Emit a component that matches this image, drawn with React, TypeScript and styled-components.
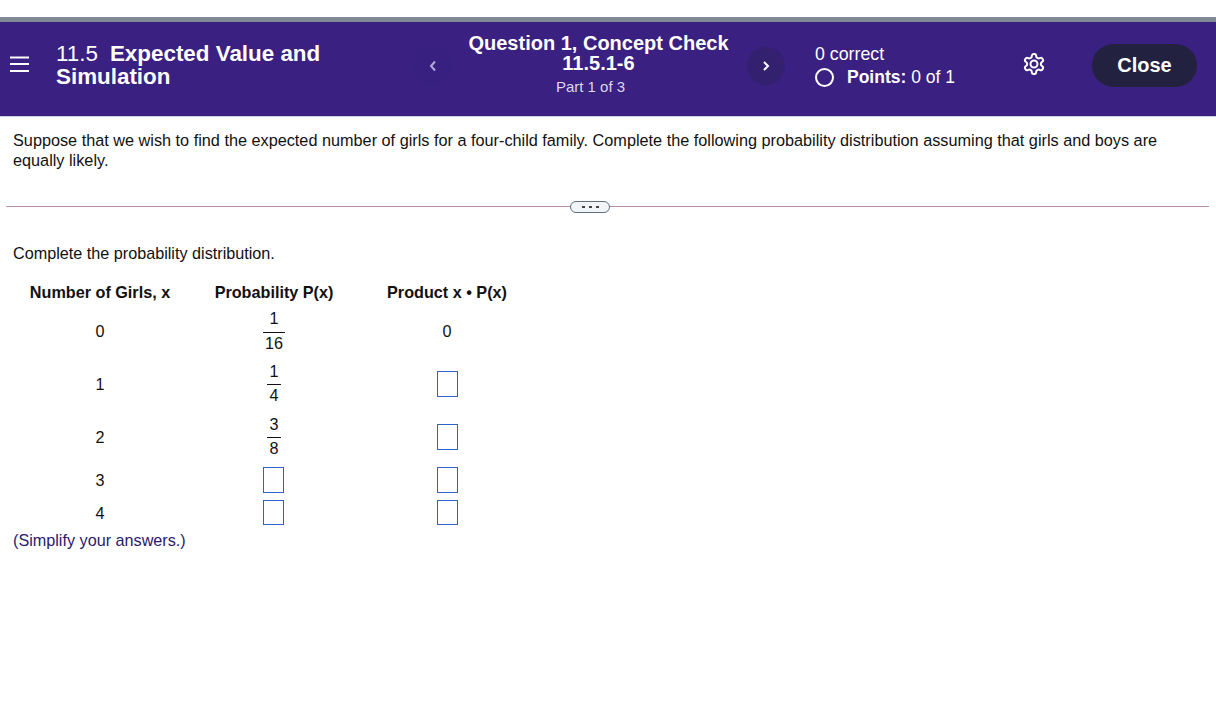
import React from "react";
import styled, { createGlobalStyle } from "styled-components";

const Global = createGlobalStyle`
  html, body { margin: 0; padding: 0; background: #fff; }
  body { font-family: "Liberation Sans", Arial, sans-serif; color: #111; }
`;

const Page = styled.div`
  padding-top: 17px;
  height: 710px;
  overflow: hidden;
`;

const Header = styled.header`
  display: flex;
  align-items: flex-start;
  height: 94px;
  background: #3a2080;
  border-top: 5px solid #7f8a96;
  border-bottom: 1px solid #c8d4e4;
  color: #fff;
`;

const Menu = styled.div`
  width: 56px;
  flex: none;
  padding: 34px 0 0 10px;
  box-sizing: border-box;
  svg { display: block; }
`;

const Title = styled.div`
  width: 358px;
  flex: none;
  padding-top: 20px;
  font-size: 22.4px;
  line-height: 23px;
  font-weight: 700;
  span { font-weight: 400; margin-right: 12px; }
`;

const NavButton = styled.div<{ $dim?: boolean }>`
  width: 38px;
  height: 38px;
  margin-top: 25px;
  flex: none;
  border-radius: 50%;
  background: ${(p) => (p.$dim ? "#382080" : "#33216f")};
  display: flex;
  align-items: center;
  justify-content: center;
  color: ${(p) => (p.$dim ? "#b0a8d8" : "#fff")};
`;

const QuestionBlock = styled.div`
  width: 293px;
  flex: none;
  margin-right: 2px;
  text-align: center;
  padding-top: 11px;
  font-weight: 700;
  font-size: 20px;
  line-height: 20px;
`;

const Part = styled.div`
  font-size: 15px;
  font-weight: 400;
  line-height: 20px;
  margin: 4px 16px 0 0;
  color: #dcd8ea;
`;

const Score = styled.div`
  width: 207px;
  flex: none;
  margin-left: 30px;
  padding-top: 21px;
  font-size: 17.8px;
  line-height: 22px;
`;

const PointsRow = styled.div`
  display: flex;
  align-items: center;
  gap: 13px;
  margin-top: 1px;
  font-size: 17.5px;
  b { font-weight: 700; }
`;

const Ring = styled.i`
  width: 15px;
  height: 15px;
  border: 2.5px solid #fff;
  border-radius: 50%;
  display: block;
`;

const Gear = styled.div`
  width: 70px;
  flex: none;
  padding-top: 30px;
  svg { display: block; }
`;

const CloseButton = styled.div`
  width: 105px;
  height: 43px;
  margin-top: 22px;
  border-radius: 22px;
  background: #22213f;
  font-size: 20px;
  font-weight: 700;
  display: flex;
  align-items: center;
  justify-content: center;
`;

const Intro = styled.p`
  margin: 0;
  padding: 13px 50px 0 13px;
  font-size: 16.25px;
  line-height: 20px;
`;

const Divider = styled.div`
  margin: 30px 7px 0 6px;
  height: 13px;
  display: flex;
  align-items: center;
  justify-content: center;
  position: relative;
  &::before {
    content: "";
    position: absolute;
    left: 0;
    right: 0;
    top: 6px;
    height: 1px;
    background: #bc8fa8;
  }
`;

const Dots = styled.div`
  position: relative;
  width: 38px;
  height: 10px;
  margin-right: 35px;
  border: 1px solid #5f7080;
  border-radius: 6px;
  background: #f2f5f8;
  display: flex;
  align-items: center;
  justify-content: center;
  gap: 4px;
  i { width: 3px; height: 2px; background: #444; display: block; }
`;

const Work = styled.div`
  padding: 30px 13px 0;
  font-size: 16.2px;
`;

const Lead = styled.div`
  line-height: 20px;
`;

const Table = styled.div`
  display: grid;
  grid-template-columns: 174px 174px 172px;
  grid-template-rows: 29px 53px 53px 53px 33px 32px;
  margin-top: 13px;
  justify-items: center;
  align-items: center;
`;

const Head = styled.div`
  font-weight: 700;
  white-space: nowrap;
  margin-top: 4px;
`;

const Fraction = styled.div`
  display: flex;
  flex-direction: column;
  align-items: center;
  line-height: 20px;
  padding-bottom: 4px;
`;

const Numerator = styled.div<{ $wide?: boolean }>`
  align-self: stretch;
  text-align: center;
  padding: 0 ${(p) => (p.$wide ? 1 : 2)}px ${(p) => (p.$wide ? 3 : 2)}px;
  border-bottom: 1px solid #111;
  min-width: ${(p) => (p.$wide ? 20 : 6)}px;
  line-height: 22px;
`;

const Denominator = styled.div<{ $wide?: boolean }>`
  padding: 0 ${(p) => (p.$wide ? 1 : 2)}px;
`;

const Blank = styled.div<{ $short?: boolean; $inner?: boolean }>`
  width: 19px;
  height: ${(p) => (p.$short ? 23 : 24)}px;
  margin: 0 ${(p) => (p.$inner ? 2 : 0)}px 2px 0;
  border: 1px solid #2f62c8;
  background: #fff;
`;

const Note = styled.div`
  color: #2a1a6e;
  line-height: 20px;
  margin-top: 1px;
`;

const Frac = ({ n, d, wide }: { n: string; d: string; wide?: boolean }) => (
  <Fraction>
    <Numerator $wide={wide}>{n}</Numerator>
    <Denominator $wide={wide}>{d}</Denominator>
  </Fraction>
);

export default function App() {
  return (
    <Page>
      <Global />
      <Header>
        <Menu>
          <svg width="19" height="16" viewBox="0 0 19 16">
            <path d="M0 1.5h19M0 8h19M0 15h19" stroke="#fff" strokeWidth="2" />
          </svg>
        </Menu>
        <Title>
          <span>11.5</span>Expected Value and Simulation
        </Title>
        <NavButton $dim>
          <svg width="8" height="12" viewBox="0 0 8 12">
            <path d="M6 1.5 2 6l4 4.5" fill="none" stroke="currentColor" strokeWidth="2" />
          </svg>
        </NavButton>
        <QuestionBlock>
          Question 1, Concept Check
          <br />
          11.5.1-6
          <Part>Part 1 of 3</Part>
        </QuestionBlock>
        <NavButton>
          <svg width="8" height="12" viewBox="0 0 8 12">
            <path d="M2 2 6 6l-4 4" fill="none" stroke="currentColor" strokeWidth="2" />
          </svg>
        </NavButton>
        <Score>
          0 correct
          <PointsRow>
            <Ring />
            <span>
              <b>Points:</b> 0 of 1
            </span>
          </PointsRow>
        </Score>
        <Gear>
          <svg width="24" height="24" viewBox="0 0 24 24" fill="none" stroke="#fff" strokeWidth="2" strokeLinecap="round" strokeLinejoin="round">
            <path d="M12.22 2h-.44a2 2 0 0 0-2 2v.18a2 2 0 0 1-1 1.73l-.43.25a2 2 0 0 1-2 0l-.15-.08a2 2 0 0 0-2.73.73l-.22.38a2 2 0 0 0 .73 2.73l.15.1a2 2 0 0 1 1 1.72v.51a2 2 0 0 1-1 1.74l-.15.09a2 2 0 0 0-.73 2.73l.22.38a2 2 0 0 0 2.73.73l.15-.08a2 2 0 0 1 2 0l.43.25a2 2 0 0 1 1 1.73V20a2 2 0 0 0 2 2h.44a2 2 0 0 0 2-2v-.18a2 2 0 0 1 1-1.73l.43-.25a2 2 0 0 1 2 0l.15.08a2 2 0 0 0 2.73-.73l.22-.39a2 2 0 0 0-.73-2.73l-.15-.08a2 2 0 0 1-1-1.74v-.5a2 2 0 0 1 1-1.74l.15-.09a2 2 0 0 0 .73-2.73l-.22-.38a2 2 0 0 0-2.73-.73l-.15.08a2 2 0 0 1-2 0l-.43-.25a2 2 0 0 1-1-1.73V4a2 2 0 0 0-2-2z" />
            <circle cx="12" cy="12" r="3.5" />
          </svg>
        </Gear>
        <CloseButton>Close</CloseButton>
      </Header>
      <Intro>
        Suppose that we wish to find the expected number of girls for a four-child family. Complete the following probability distribution assuming that girls and boys are equally likely.
      </Intro>
      <Divider>
        <Dots>
          <i />
          <i />
          <i />
        </Dots>
      </Divider>
      <Work>
        <Lead>Complete the probability distribution.</Lead>
        <Table>
          <Head>Number of Girls, x</Head>
          <Head>Probability P(x)</Head>
          <Head>Product x • P(x)</Head>
          <div>0</div>
          <Frac n="1" d="16" wide />
          <div>0</div>
          <div>1</div>
          <Frac n="1" d="4" />
          <Blank />
          <div>2</div>
          <Frac n="3" d="8" />
          <Blank />
          <div>3</div>
          <Blank $inner />
          <Blank />
          <div>4</div>
          <Blank $short $inner />
          <Blank $short />
        </Table>
        <Note>(Simplify your answers.)</Note>
      </Work>
    </Page>
  );
}
